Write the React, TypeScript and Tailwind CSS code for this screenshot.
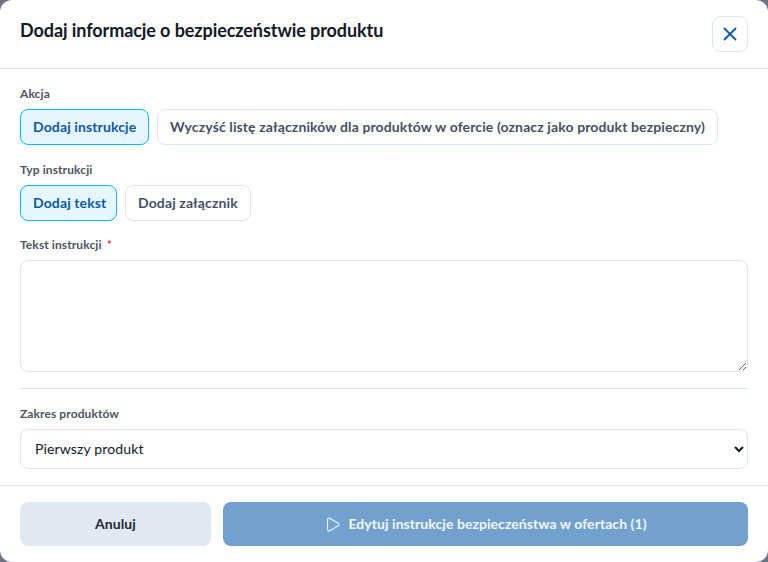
import { X, Play } from 'lucide-react';

function Choice({ label, active, width = '' }: { label: string; active?: boolean; width?: string }) {
  return (
    <button
      className={
        (active
          ? 'h-9 px-3 rounded-lg border border-sky-400 bg-[#e6f6fe] text-[#0a58a8] text-sm font-bold tracking-[0.12px] whitespace-nowrap '
          : 'h-9 px-3 rounded-lg border border-[#dbe8f4] bg-white text-[#445065] text-sm font-bold tracking-[0.12px] whitespace-nowrap ') + width
      }
    >
      {label}
    </button>
  );
}

export default function App() {
  return (
    <div className="h-[562px] w-[768px] bg-[#6b7280] font-['Lato',sans-serif]">
      <div className="h-full bg-white rounded-xl flex flex-col overflow-hidden">
        {/* Header */}
        <div className="h-[69px] shrink-0 flex justify-between items-start pt-4 pl-5 pr-5 border-b border-[#d9e8f4]">
          <h1 className="text-lg leading-7 font-bold tracking-[-0.08px] text-[#111827]">Dodaj informacje o bezpieczeństwie produktu</h1>
          <button className="w-9 h-9 rounded-lg border border-[#dbe8f4] flex items-center justify-center text-[#0a58a8]">
            <X size={22} />
          </button>
        </div>

        {/* Body */}
        <div className="flex-grow px-5 pt-[17px]">
          <div className="text-xs leading-4 font-bold tracking-[0.1px] text-[#4b5563] mb-[7px]">Akcja</div>
          <div className="flex gap-2">
            <Choice label="Dodaj instrukcje" active width="w-[129px]" />
            <Choice label="Wyczyść listę załączników dla produktów w ofercie (oznacz jako produkt bezpieczny)" />
          </div>

          <div className="text-xs leading-4 font-bold tracking-[0.1px] text-[#4b5563] mt-[17px] mb-[7px]">Typ instrukcji</div>
          <div className="flex gap-2">
            <Choice label="Dodaj tekst" active width="w-[97px]" />
            <Choice label="Dodaj załącznik" />
          </div>

          <div className="text-xs leading-4 font-bold tracking-[0.1px] text-[#4b5563] mt-4 mb-[7px]">
            Tekst instrukcji <span className="text-red-500 ml-0.5">*</span>
          </div>
          <textarea className="block w-full h-[112px] rounded-lg border border-[#dbe8f4] outline-none" />

          <div className="h-px bg-[#d9e8f4] mt-4 mb-[17px]" />

          <div className="text-xs leading-4 font-bold tracking-[0.1px] text-[#4b5563] mb-[7px]">Zakres produktów</div>
          <select className="block w-full h-10 rounded-lg border border-[#dbe8f4] bg-white pl-[10px] pb-[2px] text-sm tracking-[0.01em] text-[#111827] outline-none">
            <option>Pierwszy produkt</option>
          </select>
        </div>

        {/* Footer */}
        <div className="h-[77px] shrink-0 border-t border-[#e2e8f0] flex gap-3 px-5 pt-4">
          <button className="w-[191px] h-11 rounded-lg bg-[#e2e8f0] text-[#1f2937] text-sm font-bold tracking-[0.06px]">Anuluj</button>
          <button className="flex-grow h-11 rounded-lg bg-[#72a1cd] text-white/90 text-sm font-bold tracking-[0.06px] flex items-center justify-center gap-[7px]">
            <Play size={17} strokeWidth={1.5} />
            Edytuj instrukcje bezpieczeństwa w ofertach (1)
          </button>
        </div>
      </div>
    </div>
  );
}
